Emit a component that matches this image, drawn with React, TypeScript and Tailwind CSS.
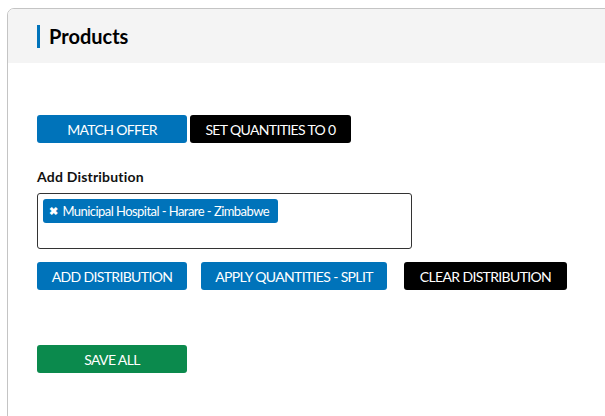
import React from 'react'

const btn = 'h-[28px] text-white text-[14px] tracking-[-0.65px] rounded-[3px]'

const App: React.FC = () => {
  return (
    <div className="w-[605px] h-[416px] overflow-hidden bg-white font-['Lato','Liberation_Sans',sans-serif]">
      <div className="ml-[7px] mt-[8px] w-[640px] min-h-[440px] border border-[#c4c4c4] rounded-tl-[7px] overflow-hidden">
        {/* Header */}
        <div className="h-[54px] bg-[#f4f4f4] flex items-center pl-[29px]">
          <div className="w-[3px] h-[23px] bg-[#0073ba]"></div>
          <h2 className="ml-[9px] text-[20px] font-bold text-black leading-none">Products</h2>
        </div>

        {/* Body */}
        <div className="pt-[52px] pl-[29px]">
          <div className="flex gap-[3px]">
            <button className={`${btn} w-[150px] bg-[#0073ba]`}>MATCH OFFER</button>
            <button className={`${btn} w-[161px] bg-black`}>SET QUANTITIES TO 0</button>
          </div>

          <label className="block mt-[24px] text-[14px] leading-[20px] font-bold text-[#111] tracking-[0.2px]">Add Distribution</label>
          <div className="mt-[6px] w-[375px] h-[56px] border border-[#333] rounded-[3px] pt-[3px] pl-[5px]">
            <span className="inline-flex items-center whitespace-nowrap h-[24px] w-[235px] bg-[#0073ba] text-white text-[13px] tracking-[-0.55px] rounded-[3px] pl-[6px]">
              <span className="text-[11px] font-bold mr-[5px]">✖</span>
              Municipal Hospital - Harare - Zimbabwe
            </span>
          </div>

          <div className="flex mt-[13px]">
            <button className={`${btn} w-[150px] bg-[#0073ba]`}>ADD DISTRIBUTION</button>
            <button className={`${btn} ml-[14px] w-[186px] bg-[#0073ba]`}>APPLY QUANTITIES - SPLIT</button>
            <button className={`${btn} ml-[17px] w-[163px] bg-black`}>CLEAR DISTRIBUTION</button>
          </div>

          <button className={`${btn} mt-[55px] w-[150px] bg-[#0b8a4d]`}>SAVE ALL</button>
        </div>
      </div>
    </div>
  )
}

export default App
